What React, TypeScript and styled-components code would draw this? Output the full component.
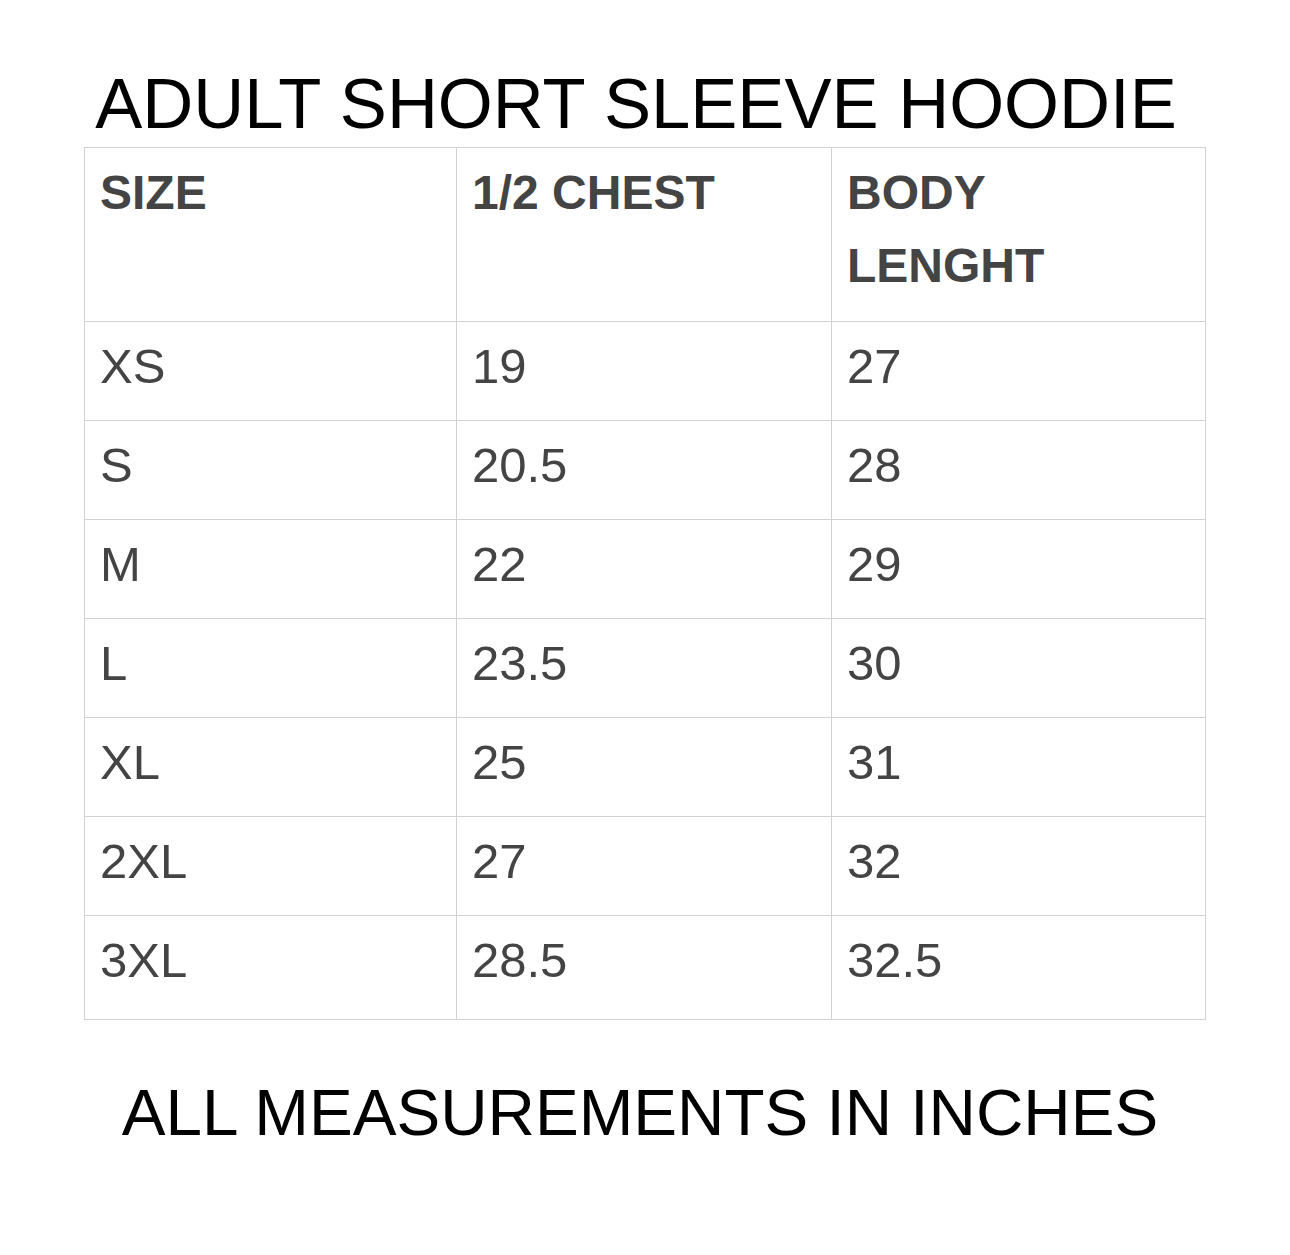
import React from 'react';
import styled, { createGlobalStyle } from 'styled-components';

interface SizeRow {
  size: string;
  chest: string;
  length: string;
}

const rows: SizeRow[] = [
  { size: 'XS', chest: '19', length: '27' },
  { size: 'S', chest: '20.5', length: '28' },
  { size: 'M', chest: '22', length: '29' },
  { size: 'L', chest: '23.5', length: '30' },
  { size: 'XL', chest: '25', length: '31' },
  { size: '2XL', chest: '27', length: '32' },
  { size: '3XL', chest: '28.5', length: '32.5' },
];

const App: React.FC = () => {
  return (
    <>
      <GlobalStyle />
      <Page>
        <Title>ADULT SHORT SLEEVE HOODIE</Title>
        <SizeTable>
          <colgroup>
            <col style={{ width: 372 }} />
            <col style={{ width: 375 }} />
            <col style={{ width: 374 }} />
          </colgroup>
          <thead>
            <tr>
              <HeadCell>SIZE</HeadCell>
              <HeadCell>1/2 CHEST</HeadCell>
              <HeadCell>
                BODY
                <br />
                LENGHT
              </HeadCell>
            </tr>
          </thead>
          <tbody>
            {rows.map((row) => (
              <tr key={row.size}>
                <Cell>{row.size}</Cell>
                <Cell>{row.chest}</Cell>
                <Cell>{row.length}</Cell>
              </tr>
            ))}
          </tbody>
        </SizeTable>
        <Footer>ALL MEASUREMENTS IN INCHES</Footer>
      </Page>
    </>
  );
};

export default App;

const GlobalStyle = createGlobalStyle`
  html, body {
    margin: 0;
    padding: 0;
    background: #ffffff;
  }
  body {
    font-family: "Liberation Sans", Arial, sans-serif;
  }
`;

const Page = styled.div`
  width: 1290px;
  height: 1255px;
  padding-top: 69px;
  box-sizing: border-box;
  display: flex;
  flex-direction: column;
`;

const Title = styled.h1`
  margin: 0 0 8px 0;
  padding-right: 18px;
  font-size: 70.6px;
  line-height: 70px;
  font-weight: 400;
  color: #000;
  text-align: center;
`;

const SizeTable = styled.table`
  margin-left: 84px;
  width: 1121px;
  border-collapse: collapse;
  table-layout: fixed;
  color: #444444;
  font-size: 48px;
  line-height: 73px;

  tbody tr:last-child td {
    padding-bottom: 22px;
  }
`;

const HeadCell = styled.th`
  border: 1px solid #d2d2d2;
  padding: 8px 15px 19px 15px;
  text-align: left;
  vertical-align: top;
  font-weight: 700;
`;

const Cell = styled.td`
  border: 1px solid #d2d2d2;
  padding: 8px 15px 17px 15px;
  text-align: left;
  vertical-align: top;
  font-size: 49px;
  font-weight: 400;
`;

const Footer = styled.p`
  margin: 60px 0 0 0;
  padding-right: 10px;
  font-size: 65.6px;
  line-height: 65px;
  color: #000;
  text-align: center;
`;
